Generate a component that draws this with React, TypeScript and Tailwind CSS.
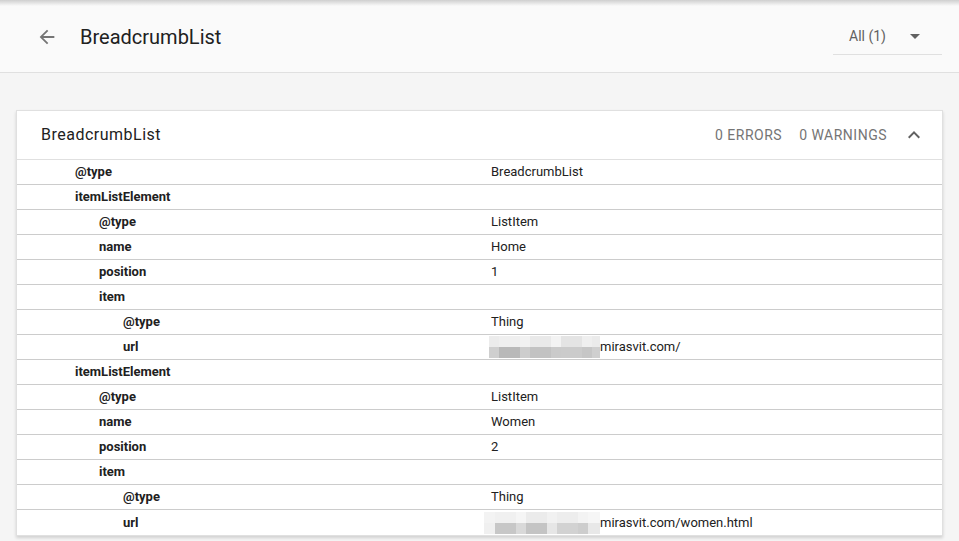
import React from "react";

type Row = { k: string; v?: string; lvl: number; blur?: "a" | "b" };

const rows: Row[] = [
  { k: "@type", v: "BreadcrumbList", lvl: 0 },
  { k: "itemListElement", lvl: 0 },
  { k: "@type", v: "ListItem", lvl: 1 },
  { k: "name", v: "Home", lvl: 1 },
  { k: "position", v: "1", lvl: 1 },
  { k: "item", lvl: 1 },
  { k: "@type", v: "Thing", lvl: 2 },
  { k: "url", v: "mirasvit.com/", lvl: 2, blur: "a" },
  { k: "itemListElement", lvl: 0 },
  { k: "@type", v: "ListItem", lvl: 1 },
  { k: "name", v: "Women", lvl: 1 },
  { k: "position", v: "2", lvl: 1 },
  { k: "item", lvl: 1 },
  { k: "@type", v: "Thing", lvl: 2 },
  { k: "url", v: "mirasvit.com/women.html", lvl: 2, blur: "b" },
];

const blurA = [
  ["#ececec", "#efefef", "#f2f2f2", "#e9e9e9", "#f3f3f3", "#e4e4e4", "#efefef", "#ebebeb"],
  ["#cfcfcf", "#b9b9b9", "#cdcdcd", "#c2c2c2", "#cacaca", "#cbcbcb", "#c6c6c6", "#cfcfcf"],
];
const blurB = [
  ["#f3f3f3", "#f0f0f0", "#f5f5f5", "#ebebeb", "#f1f1f1", "#ededed", "#f3f3f3", "#f6f6f6"],
  ["#f0f0f0", "#c7c7c7", "#d9d9d9", "#c4c4c4", "#e6e6e6", "#d2d2d2", "#cdcdcd", "#e8e8e8"],
];
const widthsA = [10, 21, 10, 21, 10, 21, 10, 8];
const widthsB = [11, 21, 10, 21, 10, 21, 10, 12];

function Blur({ kind }: { kind: "a" | "b" }) {
  const colors = kind === "a" ? blurA : blurB;
  const widths = kind === "a" ? widthsA : widthsB;
  return (
    <div className="flex flex-col">
      {colors.map((row, ri) => (
        <div key={ri} className="flex h-[11px]">
          {row.map((c, ci) => (
            <div key={ci} style={{ background: c, width: widths[ci] }} />
          ))}
        </div>
      ))}
    </div>
  );
}

export default function App() {
  return (
    <div
      className="w-[959px] h-[541px] overflow-hidden bg-[#f5f5f5] text-[#212121]"
      style={{ fontFamily: "Roboto, 'Liberation Sans', sans-serif" }}
    >
      {/* Header */}
      <div className="relative h-[73px] bg-[#fafafa] border-b border-[#e0e0e0] flex items-center">
        <div className="absolute left-0 right-0 top-0 h-[6px] bg-gradient-to-b from-[#cfcfcf] to-transparent" />
        <div className="pl-[36px] pr-[22px] pt-[2px]">
          <svg width="22" height="22" viewBox="0 0 24 24" fill="#757575">
            <path d="M20 11H7.83l5.59-5.59L12 4l-8 8 8 8 1.41-1.41L7.83 13H20v-2z" />
          </svg>
        </div>
        <div className="text-[20px] leading-none pt-[1px]">BreadcrumbList</div>
        <div className="ml-auto mr-[17px] mt-[1px] w-[109px] h-[36px] border-b border-[#e0e0e0] flex items-center pl-[16px]">
          <span className="text-[14px] text-[#616161]">All (1)</span>
          <svg className="ml-auto mr-[22px]" width="10" height="5" viewBox="0 0 10 5">
            <path d="M0 0h10L5 5z" fill="#616161" />
          </svg>
        </div>
      </div>

      {/* Card */}
      <div className="pt-[37px] px-[16px]">
        <div className="w-[927px] bg-white border border-[#e0e0e0] shadow-[0_2px_3px_rgba(0,0,0,0.15)]">
          <div className="h-[49px] flex items-center border-b border-[#e0e0e0]">
            <div className="pl-[24px] text-[16px] tracking-[0.5px] text-[#212121]">BreadcrumbList</div>
            <div className="ml-auto flex items-center text-[14px] tracking-[0.5px] text-[#757575]">
              <span>0 ERRORS</span>
              <span className="ml-[17px]">0 WARNINGS</span>
              <svg className="ml-[15px] mr-[16px]" width="24" height="24" viewBox="0 0 24 24" fill="#616161">
                <path d="M7.41 15.41L12 10.83l4.59 4.58L18 14l-6-6-6 6z" />
              </svg>
            </div>
          </div>
          {rows.map((r, i) => (
            <div
              key={i}
              className={`h-[25px] flex items-center text-[13px] ${i < rows.length - 1 ? "border-b border-[#cccccc]" : ""}`}
            >
              <div className="w-[474px] shrink-0 flex">
                <span
                  className={`font-bold ${r.lvl === 0 ? "pl-[58px]" : r.lvl === 1 ? "pl-[82px]" : "pl-[106px]"}`}
                >
                  {r.k}
                </span>
              </div>
              {r.blur ? (
                <div className={`flex items-center ${r.blur === "a" ? "ml-[-2px]" : "ml-[-7px]"}`}>
                  <Blur kind={r.blur} />
                  <span>{r.v}</span>
                </div>
              ) : (
                <span>{r.v}</span>
              )}
            </div>
          ))}
        </div>
      </div>
    </div>
  );
}
